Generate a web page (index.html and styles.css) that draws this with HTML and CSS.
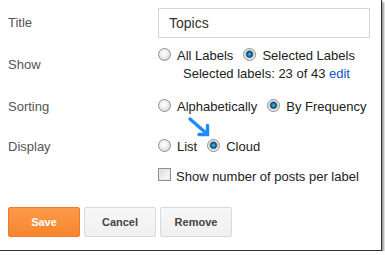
FILE: index.html
```html
<!DOCTYPE html>
<html>
<head>
<meta charset="utf-8">
<link rel="stylesheet" href="styles.css">
</head>
<body>
<div class="frame">
  <div class="row r-title">
    <div class="lbl">Title</div>
    <div class="ctl"><input class="txt" type="text" value="Topics"></div>
  </div>
  <div class="row r-show">
    <div class="lbl">Show</div>
    <div class="ctl">
      <div class="opts">
        <label class="opt"><input class="radio" type="radio" name="show">All Labels</label>
        <label class="opt"><input class="radio" type="radio" name="show" checked>Selected Labels</label>
      </div>
      <div class="sub">Selected labels: 23 of 43 <a class="edit" href="#">edit</a></div>
    </div>
  </div>
  <div class="row r-sort">
    <div class="lbl">Sorting</div>
    <div class="ctl">
      <div class="opts">
        <label class="opt"><input class="radio" type="radio" name="sort">Alphabetically</label>
        <label class="opt"><input class="radio" type="radio" name="sort" checked>By Frequency</label>
      </div>
    </div>
  </div>
  <div class="row r-disp">
    <div class="lbl">Display</div>
    <div class="ctl">
      <div class="opts">
        <label class="opt"><input class="radio" type="radio" name="disp">List</label>
        <label class="opt"><input class="radio" type="radio" name="disp" checked>Cloud</label>
      </div>
    </div>
  </div>
  <div class="row r-check">
    <div class="lbl"></div>
    <div class="ctl">
      <label class="opt chk"><input class="check" type="checkbox">Show number of posts per label</label>
    </div>
  </div>
  <div class="buttons">
    <button class="btn save">Save</button>
    <button class="btn">Cancel</button>
    <button class="btn">Remove</button>
  </div>
  <svg class="arrow" width="26" height="26" viewBox="0 0 26 26">
    <line x1="4" y1="5" x2="20" y2="19" stroke="#1f8bff" stroke-width="3.4" stroke-linecap="round"/>
    <polyline points="13,20.5 21.5,20.5 21.5,11.5" fill="none" stroke="#1f8bff" stroke-width="3.4" stroke-linecap="round" stroke-linejoin="miter"/>
  </svg>
</div>
</body>
</html>
```

FILE: styles.css
```css
html, body {
  margin: 0;
  padding: 0;
  background: #fff;
}
body {
  font-family: "Liberation Sans", Arial, sans-serif;
  font-size: 13px;
  color: #222;
}
.frame {
  position: relative;
  box-sizing: border-box;
  width: 382px;
  height: 251px;
  padding: 8px 0 0 8px;
  background: #fff;
  border-right: 1px solid #333;
  border-bottom: 1px solid #333;
  box-shadow: 2px 2px 2px rgba(0, 0, 0, 0.4);
}
.row {
  display: flex;
  align-items: center;
}
.lbl {
  width: 150px;
  flex: none;
  color: #555;
  font-size: 13px;
  line-height: 18px;
}
.ctl {
  display: flex;
  flex-direction: column;
}
.txt {
  box-sizing: border-box;
  width: 212px;
  height: 30px;
  margin: 0;
  padding: 0 10px;
  border: 1px solid #d6d6d6;
  font-family: "Liberation Sans", Arial, sans-serif;
  font-size: 14px;
  color: #333;
  outline: none;
}
.r-show { margin-top: 9px; }
.r-sort { margin-top: 15px; }
.r-disp { margin-top: 22px; }
.r-check { margin-top: 12px; }
.opts {
  display: flex;
  gap: 10px;
  line-height: 18px;
}
.opt {
  display: flex;
  align-items: flex-start;
  gap: 6px;
  line-height: 18px;
  color: #222;
}
.sub {
  line-height: 18px;
  padding-left: 25px;
  color: #222;
}
.edit {
  color: #15c;
  text-decoration: none;
}
.radio {
  appearance: none;
  -webkit-appearance: none;
  box-sizing: border-box;
  width: 13px;
  height: 13px;
  margin: 1px 0 0 0;
  flex: none;
  border-radius: 50%;
  border: 1px solid #8e8e8e;
  background: radial-gradient(circle at 45% 40%, #ffffff 0, #f1f1f1 35%, #cdcdcd 100%);
}
.radio:checked {
  background: radial-gradient(circle at 50% 48%, #7fd4f2 0, #1f86bb 1.3px, #0e4f78 2.8px, #6b8797 3.6px, #f0f0f0 4.4px, #cfcfcf 100%);
}
.chk {
  gap: 5px;
}
.check {
  appearance: none;
  -webkit-appearance: none;
  box-sizing: border-box;
  width: 13px;
  height: 13px;
  margin: 0;
  flex: none;
  border: 1px solid #8e8e8e;
  background: linear-gradient(135deg, #d8d8d8 0, #f4f4f4 70%, #fff 100%);
  box-shadow: inset 0 0 0 1px #e9e9e9;
}
.buttons {
  display: flex;
  gap: 4px;
  margin-top: 21px;
}
.btn {
  box-sizing: border-box;
  width: 72px;
  height: 30px;
  margin: 0;
  padding: 0;
  border: 1px solid #d9d9d9;
  border-radius: 2px;
  background: linear-gradient(#f7f7f7, #f0f0f0);
  font-family: "Liberation Sans", Arial, sans-serif;
  font-size: 11px;
  font-weight: bold;
  color: #444;
}
.btn.save {
  border-color: #f07a2c;
  background: linear-gradient(#fb9a4a, #f6862f);
  color: #fff;
}
.arrow {
  position: absolute;
  left: 186px;
  top: 114px;
}
```
